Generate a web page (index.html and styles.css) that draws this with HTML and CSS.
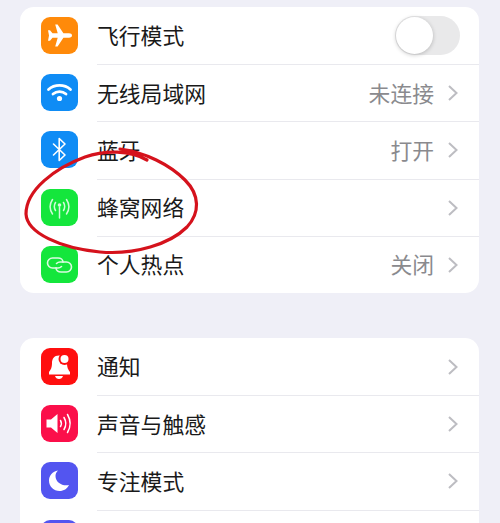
FILE: index.html
```html
<!DOCTYPE html>
<html lang="zh">
<head>
<meta charset="utf-8">
<title>设置</title>
<link rel="stylesheet" href="styles.css">
</head>
<body>
<main class="page">
  <section class="card">
    <div class="row">
      <span class="icon orange"><svg viewBox="0 0 37 37"><path d="M31 18.500c0-1.300-1.200-2.200-3-2.200h-5.600L16.600 7.500h-2.400l2.500 8.800h-5.200L9 13.300H7l1 5.200-1 5.200h2l2.500-3h5.200l-2.500 8.800h2.400l5.800-8.800H28c1.800 0 3-.9 3-2.200z" fill="#fff"/></svg></span>
      <div class="body first"><span class="label">飞行模式</span><span class="toggle"><span class="knob"></span></span></div>
    </div>
    <div class="row">
      <span class="icon blue"><svg viewBox="0 0 37 37" fill="none" stroke="#fff" stroke-linecap="round"><path d="M7.500 15.500C13.500 10 23.500 10 29.500 15.500" stroke-width="2.800"/><path d="M12 20c3.800-3.300 9.200-3.300 13 0" stroke-width="2.800"/><circle cx="18.500" cy="24.500" r="2.600" fill="#fff" stroke="none"/></svg></span>
      <div class="body"><span class="label">无线局域网</span><span class="value">未连接</span><svg class="chev" viewBox="0 0 12 18"><path d="M2 2l7.500 7L2 16"/></svg></div>
    </div>
    <div class="row">
      <span class="icon blue"><svg viewBox="0 0 37 37" fill="none" stroke="#fff" stroke-width="1.600" stroke-linejoin="round" stroke-linecap="round"><path d="M12.500 13l11.500 11-5.800 5.500V7.500L24 13 12.500 24"/></svg></span>
      <div class="body"><span class="label">蓝牙</span><span class="value">打开</span><svg class="chev" viewBox="0 0 12 18"><path d="M2 2l7.500 7L2 16"/></svg></div>
    </div>
    <div class="row">
      <span class="icon green"><svg viewBox="0 0 37 37" fill="none" stroke="#fff" stroke-width="1.500" stroke-linecap="round" opacity=".8"><path d="M11.500 10.500c-3 4.500-3 10 0 14.500M25.500 10.500c3 4.500 3 10 0 14.500M14.500 13.500c-1.500 2.500-1.500 5.500 0 8M22.500 13.500c1.500 2.500 1.500 5.500 0 8"/><path d="M18.500 18v11"/><circle cx="18.500" cy="16" r="1.800" fill="#fff" stroke="none"/></svg></span>
      <div class="body"><span class="label">蜂窝网络</span><svg class="chev" viewBox="0 0 12 18"><path d="M2 2l7.500 7L2 16"/></svg></div>
    </div>
    <div class="row">
      <span class="icon green"><svg viewBox="0 0 37 37" fill="none" stroke="#fff" stroke-width="1.600" stroke-linecap="round" opacity=".85"><path d="M20.500 20.500c-1 1-2.200 1.500-3.500 1.500h-5.500a5 5 0 0 1 0-10H17c2.800 0 5 1.800 5 4.200"/><path d="M15.500 17.500c1-1 2.200-1.500 3.500-1.500h6.500a5 5 0 0 1 0 10H20c-2.800 0-5-1.800-5-4.200"/></svg></span>
      <div class="body"><span class="label">个人热点</span><span class="value">关闭</span><svg class="chev" viewBox="0 0 12 18"><path d="M2 2l7.500 7L2 16"/></svg></div>
    </div>
  </section>
  <section class="card">
    <div class="row">
      <span class="icon red"><svg viewBox="0 0 37 37"><path d="M18 7.500c-5 0-7 3.500-7 7.500 0 5-1.500 7-3 9v2.500h21V24c-1.500-2-3-4-3-9 0-4-3-7.500-8-7.500z" fill="#fff"/><path d="M14 28h8c-.6 2-2 3-4 3s-3.400-1-4-3z" fill="#fff"/><circle cx="23.500" cy="11" r="6" fill="#ff0f0f"/><circle cx="23.500" cy="11" r="4" fill="#fff"/></svg></span>
      <div class="body first"><span class="label">通知</span><svg class="chev" viewBox="0 0 12 18"><path d="M2 2l7.500 7L2 16"/></svg></div>
    </div>
    <div class="row">
      <span class="icon pink"><svg viewBox="0 0 37 37" fill="none" stroke="#fff" stroke-width="1.500" stroke-linecap="round"><path d="M5.500 14.500h4.500l6.500-5.500v19l-6.500-5.500H5.500z" fill="#fff" stroke="none"/><path d="M19.500 15.500c1.200 2 1.200 4 0 6M23 12.500c2.400 4 2.400 8 0 12M26.500 9.500c3.500 6 3.500 12 0 18"/></svg></span>
      <div class="body"><span class="label">声音与触感</span><svg class="chev" viewBox="0 0 12 18"><path d="M2 2l7.500 7L2 16"/></svg></div>
    </div>
    <div class="row">
      <span class="icon indigo"><svg viewBox="0 0 37 37"><path d="M17 8.500C11.500 9.500 8 13.500 8 18.500c0 6 4.800 10.500 10.500 10.500 4.300 0 7.800-2.200 9.500-6-6.500 1.500-13.500-2.500-13.500-9 0-2 .9-4 2.500-5.500z" fill="#fff"/></svg></span>
      <div class="body"><span class="label">专注模式</span><svg class="chev" viewBox="0 0 12 18"><path d="M2 2l7.500 7L2 16"/></svg></div>
    </div>
    <div class="row">
      <span class="icon indigo"></span>
      <div class="body"></div>
    </div>
  </section>
  <svg class="scribble" viewBox="0 0 500 523" fill="none"><path d="M147 160C130 150 105 150 85 157 55 168 26 190 26 214 27 233 60 248 100 252 135 255 170 244 187 227 200 213 200 195 185 180 170 165 145 152 120 149" stroke="#d5121c" stroke-width="3.200" stroke-linecap="round"/></svg>
</main>
</body>
</html>
```
FILE: styles.css
```css
* { box-sizing: border-box; }
html, body { margin: 0; padding: 0; }
body {
  width: 500px;
  height: 523px;
  overflow: hidden;
  background: #efeff7;
  font-family: "Noto Sans CJK SC", "Liberation Sans", sans-serif;
}
.page {
  position: relative;
  height: 523px;
  overflow: hidden;
  padding: 7px 21px 0 20px;
  display: flex;
  flex-direction: column;
  gap: 45px;
}
.card {
  flex: none;
  background: #fff;
  border-radius: 14px;
  overflow: hidden;
}
.row {
  display: flex;
  align-items: stretch;
  height: 57.2px;
  padding-left: 21px;
}
.icon {
  flex: none;
  align-self: center;
  width: 37px;
  height: 37px;
  border-radius: 9px;
  margin-right: 19px;
  display: flex;
}
.icon svg { width: 37px; height: 37px; }
.orange { background: #ff8a0a; }
.blue { background: #0f8cf5; }
.green { background: #14e63c; }
.red { background: #ff0f0f; }
.pink { background: #fb0f4a; }
.indigo { background: #5355f0; }
.body {
  flex: 1;
  min-width: 0;
  display: flex;
  align-items: center;
  border-top: 1.500px solid #e9e9ee;
  padding-right: 20px;
}
.body.first { border-top: 0; }
.label {
  flex: 1;
  font-size: 21.800px;
  color: #1a1a1a;
  padding-bottom: 2px;
}
.value {
  font-size: 21.800px;
  color: #8a8a8e;
  margin-right: 13px;
  padding-bottom: 2px;
}
.chev {
  width: 12px;
  height: 18px;
  fill: none;
  stroke: #bdbdc2;
  stroke-width: 2;
}
.toggle {
  width: 65px;
  height: 39px;
  margin-right: -1px;
  border-radius: 20px;
  background: #e9e9ea;
  display: flex;
  padding: 1px;
}
.knob {
  width: 37px;
  height: 37px;
  border-radius: 50%;
  background: #fff;
  box-shadow: 0 1px 4px rgba(0, 0, 0, .22);
}
.scribble {
  position: absolute;
  left: 0;
  top: 0;
  width: 500px;
  height: 523px;
  pointer-events: none;
}
```
